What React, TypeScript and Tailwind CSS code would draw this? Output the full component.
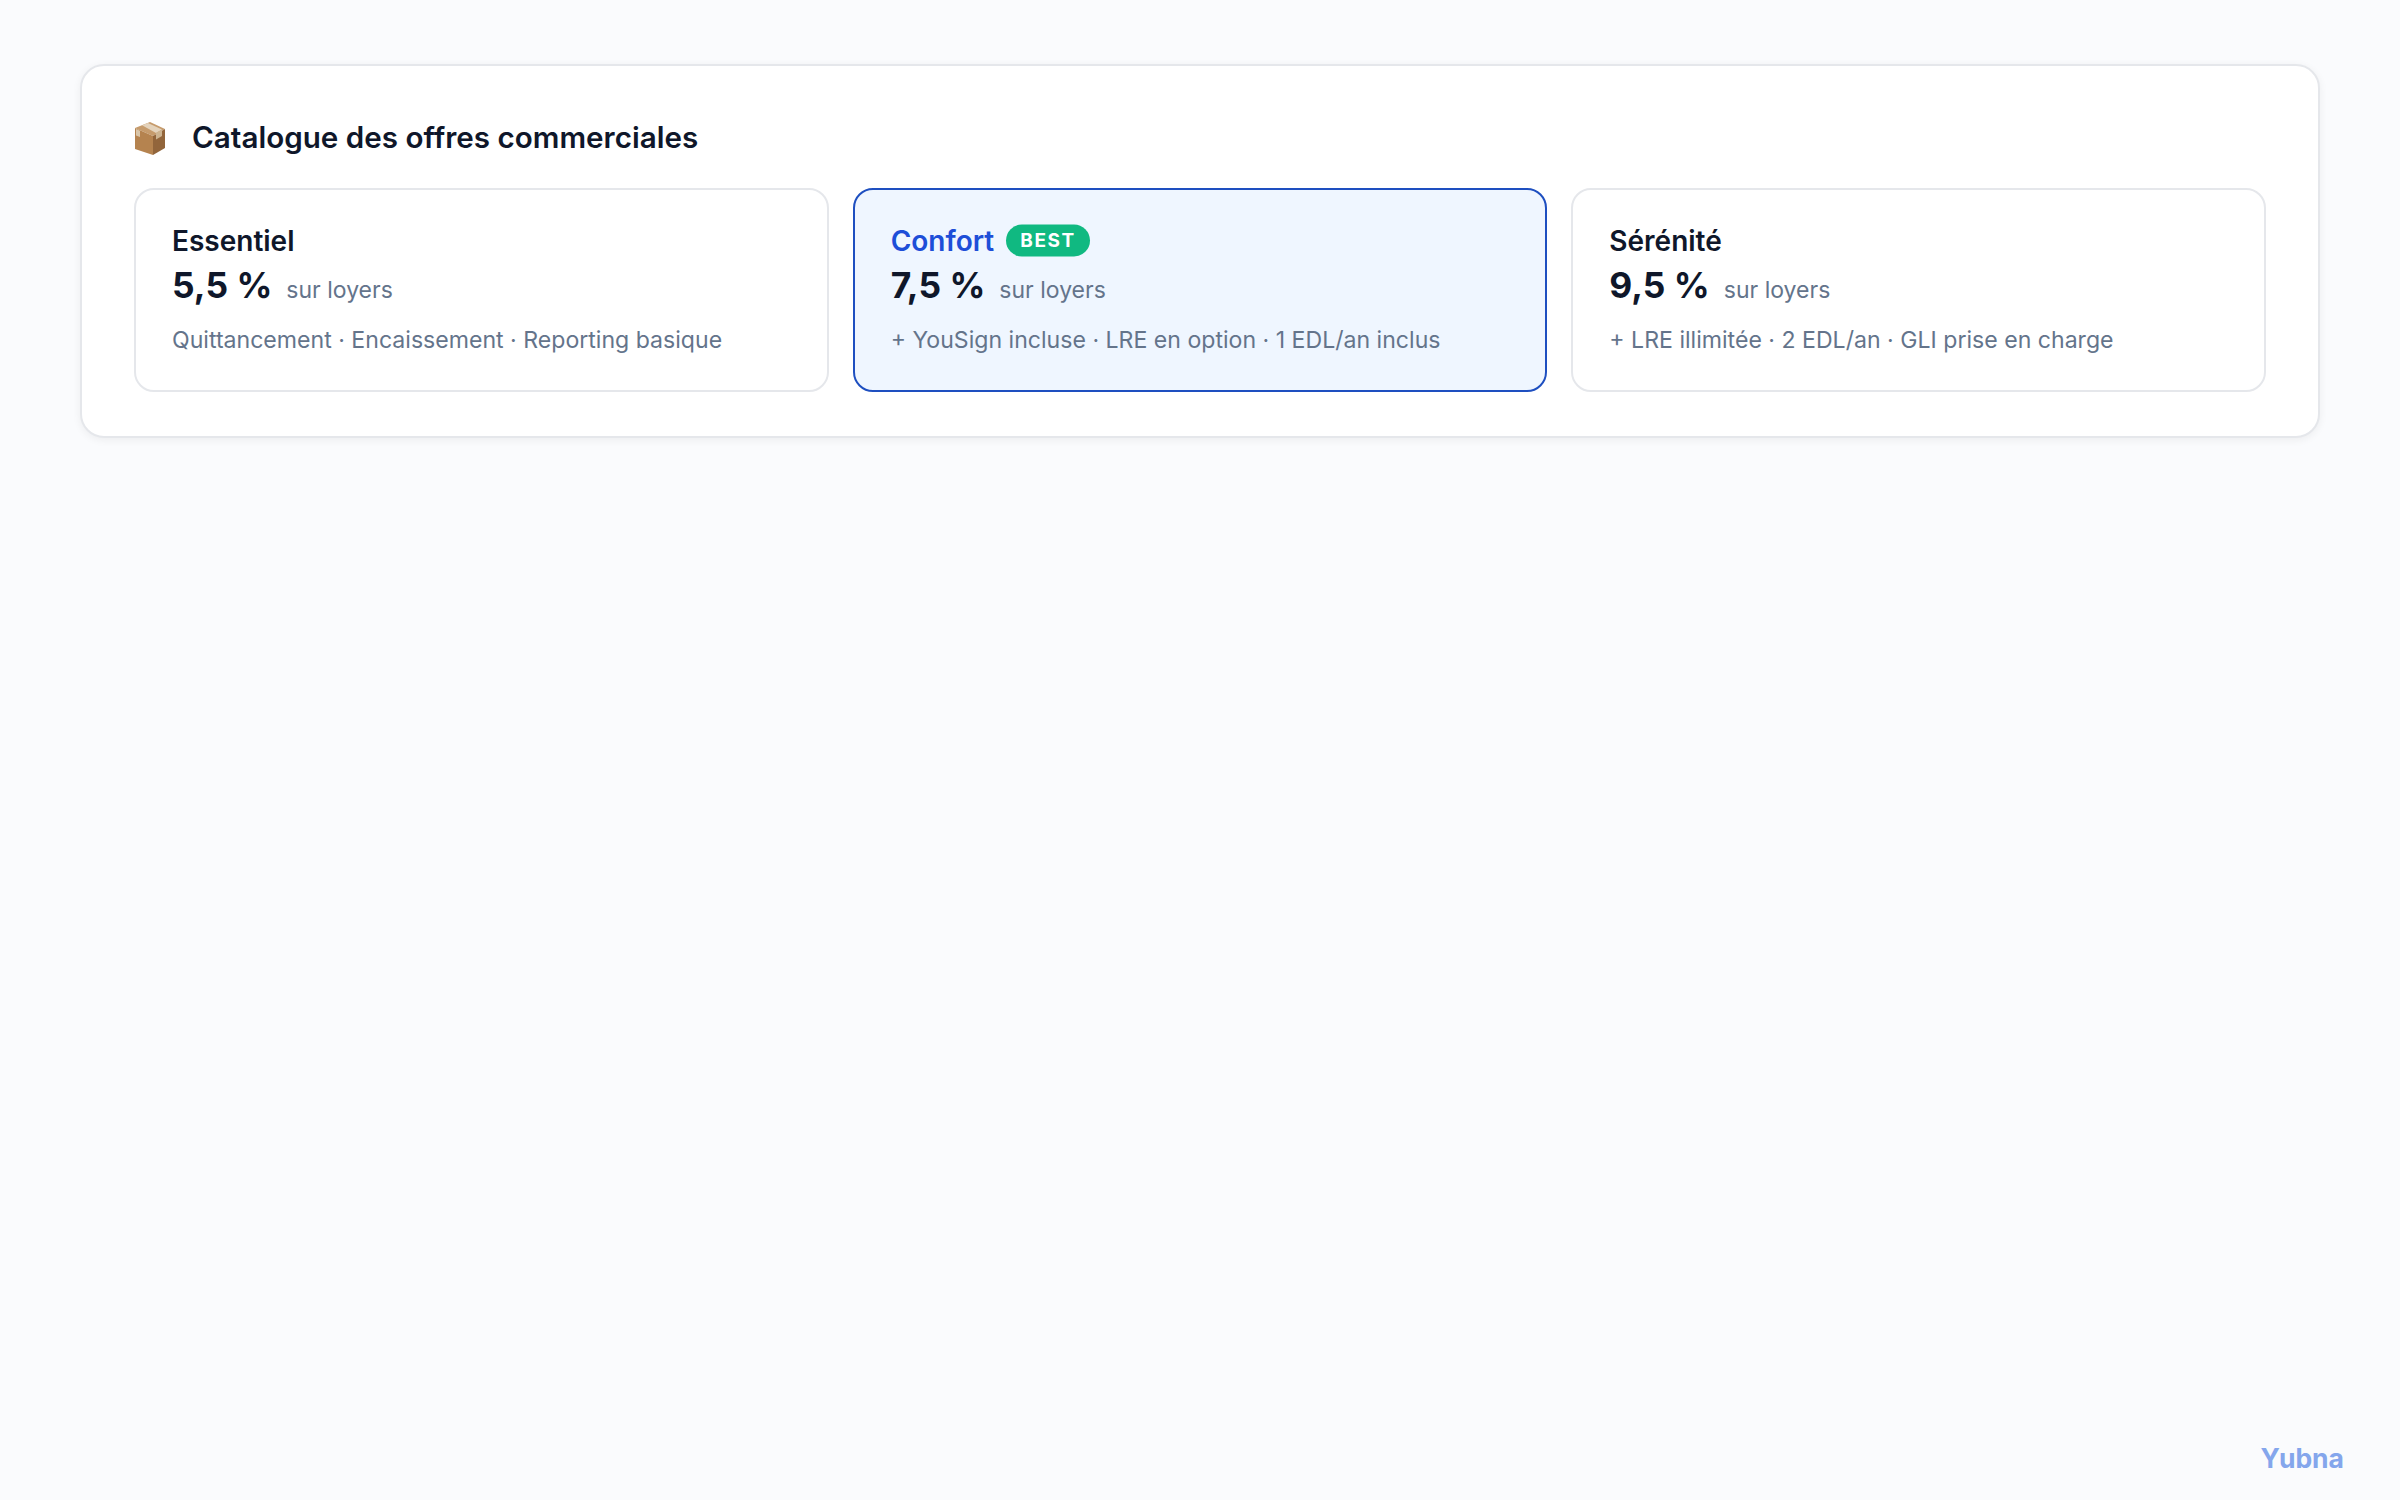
export default function App() {
  const offers = [
    { name: "Essentiel", pct: "5,5 %", desc: "Quittancement · Encaissement · Reporting basique" },
    { name: "Confort", pct: "7,5 %", desc: "+ YouSign incluse · LRE en option · 1 EDL/an inclus", best: true },
    { name: "Sérénité", pct: "9,5 %", desc: "+ LRE illimitée · 2 EDL/an · GLI prise en charge" },
  ];
  return (
    <div className="relative min-h-[1500px] bg-[#fafbfd] px-[80px] pt-[64px] font-['Inter',sans-serif]">
      <section className="rounded-[24px] border-2 border-[#e5e7eb] bg-white px-[52px] pt-[51px] pb-[44px] shadow-[0_2px_8px_rgba(0,0,0,0.06)]">
        <div className="mb-[31px] flex items-center gap-[27px]">
          <svg viewBox="-1 -3 31 36" className="h-[36px] w-[31px]" aria-label="📦">
            <path d="M0 6 L15 0 L30 7 L18 14 Z" fill="#c69b6c" />
            <path d="M0 6 L18 14 L18 33 L0 27 Z" fill="#b5834f" />
            <path d="M18 14 L30 7 L30 26 L18 33 Z" fill="#92653b" />
            <path d="M7 3.2 L13 0.9 L27 7.6 L21 11 Z" fill="#e4d3bc" />
            <path d="M21 11 L27 7.6 L27 14 L21 17.5 Z" fill="#cdb491" />
            <path d="M1 7 L5 8.8 L5 15 L1 13.4 Z" fill="#d9c6aa" />
          </svg>
          <h2 className="text-[29.6px] leading-[40px] font-semibold text-[#0f172a]">Catalogue des offres commerciales</h2>
        </div>
        <div className="grid grid-cols-3 gap-[24px]">
          {offers.map((o) => (
            <div key={o.name} className={o.best ? "rounded-[20px] border-2 border-[#1e4fc0] bg-[#eff6ff] px-[36px] pt-[33px] pb-[34px]" : "rounded-[20px] border-2 border-[#e5e7eb] bg-white px-[36px] pt-[33px] pb-[34px]"}>
              <div className="flex items-center gap-[12px]">
                <span className={o.best ? "text-[28px] leading-[36px] font-semibold text-[#1d4ed8]" : "text-[28px] leading-[36px] font-semibold text-[#0f172a]"}>{o.name}</span>
                {o.best && <span className="-translate-y-[0.5px] rounded-full bg-[#10b981] px-[14px] py-[4px] text-[19px] leading-[24px] font-bold tracking-[1.6px] text-white">BEST</span>}
              </div>
              <div className="mt-[3px] flex items-baseline gap-[14px]">
                <span className="text-[35.4px] leading-[48px] font-bold text-[#0f172a]">{o.pct}</span>
                <span className="text-[23px] leading-[32px] text-[#64748b]">sur loyers</span>
              </div>
              <p className="mt-[14px] text-[23.1px] leading-[32px] text-[#64748b]">{o.desc}</p>
            </div>
          ))}
        </div>
      </section>
      <div className="absolute bottom-[24px] right-[56px] text-[26.5px] leading-[36px] font-bold text-[#84a6ec]">Yubna</div>
    </div>
  );
}
